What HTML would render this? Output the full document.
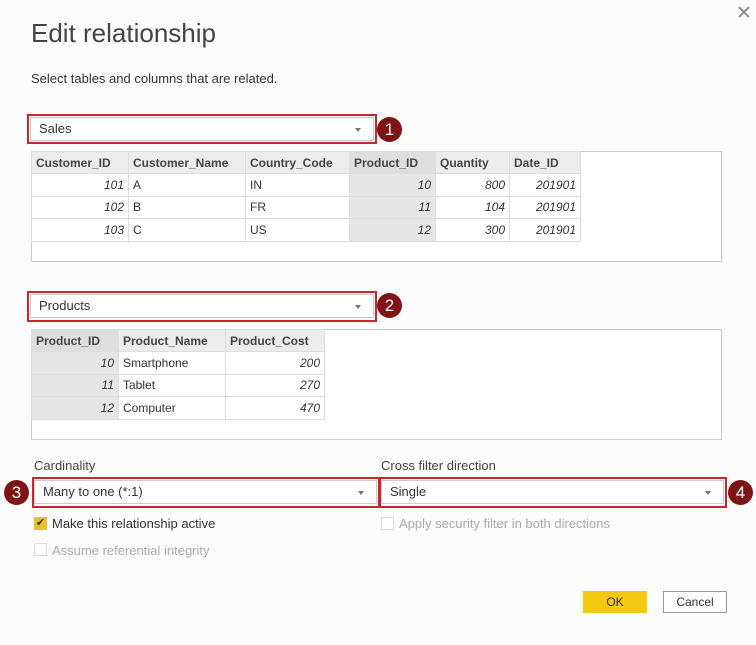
<!DOCTYPE html><html><head><style>
body{margin:0;width:756px;height:645px;background:#fcfcfc;font-family:"Liberation Sans",sans-serif;position:relative;overflow:hidden;color:#333}
.a{position:absolute}
.t{border-collapse:collapse;font-size:12px;position:absolute;background:#fff}
.t td{border:1px solid #ddd;height:21.4px;padding:0 4px;white-space:nowrap}
.t tr:first-child td{background:#ececec;font-weight:bold;color:#444}
.t td.g{background:#e6e6e6}
.n{text-align:right;font-style:italic}
.box{position:absolute;border:1px solid #ccc;background:#fff}
.sel{position:absolute;background:#fff;border:1px solid #ccc;font-size:13px;box-sizing:border-box;padding:0 8px;line-height:22px}
.sel:after{content:"";position:absolute;right:12px;top:10px;border:3px solid transparent;border-top:4px solid #777}
.red{position:absolute;border:2px solid #c8262a;box-sizing:border-box}
.c{position:absolute;width:25px;height:25px;border-radius:50%;background:#7e1416;color:#fff;font-size:17px;text-align:center;line-height:25px}
.lbl{position:absolute;font-size:13px;color:#444}
.cb{position:absolute;width:11px;height:11px;border:1px solid #ddd;background:#fff}
</style></head><body>
<div class="a" style="left:736px;top:2px;font-size:19px;color:#888">✕</div>
<div class="a" style="left:31px;top:18px;font-size:26px;color:#444">Edit relationship</div>
<div class="lbl" style="left:31px;top:71px;color:#333">Select tables and columns that are related.</div>

<div class="sel" style="left:30px;top:117px;width:344px;height:24px">Sales</div>
<div class="red" style="left:27px;top:114px;width:350px;height:30px"></div>
<div class="c" style="left:377px;top:117px">1</div>
<div class="box" style="left:31px;top:151px;width:689px;height:109px"></div>
<table class="t" style="left:31px;top:151px">
<tr><td style="width:88px">Customer_ID</td><td style="width:108px">Customer_Name</td><td style="width:95px">Country_Code</td><td class="g" style="width:77px;background:#dedede">Product_ID</td><td style="width:65px">Quantity</td><td style="width:62px">Date_ID</td></tr>
<tr><td class="n">101</td><td>A</td><td>IN</td><td class="n g">10</td><td class="n">800</td><td class="n">201901</td></tr>
<tr><td class="n">102</td><td>B</td><td>FR</td><td class="n g">11</td><td class="n">104</td><td class="n">201901</td></tr>
<tr><td class="n">103</td><td>C</td><td>US</td><td class="n g">12</td><td class="n">300</td><td class="n">201901</td></tr>
</table>

<div class="sel" style="left:30px;top:294px;width:344px;height:24px">Products</div>
<div class="red" style="left:27px;top:291px;width:350px;height:31px"></div>
<div class="c" style="left:377px;top:293px">2</div>
<div class="box" style="left:31px;top:329px;width:689px;height:109px"></div>
<table class="t" style="left:31px;top:329px">
<tr><td style="width:78px;background:#dedede">Product_ID</td><td style="width:98px">Product_Name</td><td style="width:90px">Product_Cost</td></tr>
<tr><td class="n g">10</td><td>Smartphone</td><td class="n">200</td></tr>
<tr><td class="n g">11</td><td>Tablet</td><td class="n">270</td></tr>
<tr><td class="n g">12</td><td>Computer</td><td class="n">470</td></tr>
</table>

<div class="lbl" style="left:34px;top:458px">Cardinality</div>
<div class="lbl" style="left:381px;top:458px">Cross filter direction</div>
<div class="sel" style="left:34px;top:480px;width:343px;height:24px">Many to one (*:1)</div>
<div class="sel" style="left:381px;top:480px;width:343px;height:24px">Single</div>
<div class="red" style="left:32px;top:477px;width:348px;height:31px"></div>
<div class="red" style="left:379px;top:477px;width:348px;height:31px"></div>
<div class="c" style="left:4px;top:480px">3</div>
<div class="c" style="left:728px;top:480px">4</div>

<div class="cb" style="left:34px;top:517px;background:#e8c12a;border-color:#e8c12a;color:#333;font-size:11px;line-height:11px;text-align:center">✔</div>
<div class="lbl" style="left:52px;top:516px;color:#333">Make this relationship active</div>
<div class="cb" style="left:34px;top:543px"></div>
<div class="lbl" style="left:52px;top:543px;color:#aaa">Assume referential integrity</div>
<div class="cb" style="left:381px;top:517px"></div>
<div class="lbl" style="left:399px;top:516px;color:#aaa">Apply security filter in both directions</div>

<div class="a" style="left:583px;top:591px;width:64px;height:22px;background:#f2c811;font-size:12px;text-align:center;line-height:22px">OK</div>
<div class="a" style="left:663px;top:591px;width:62px;height:20px;background:#fff;border:1px solid #999;font-size:12px;text-align:center;line-height:20px">Cancel</div>
</body></html>
